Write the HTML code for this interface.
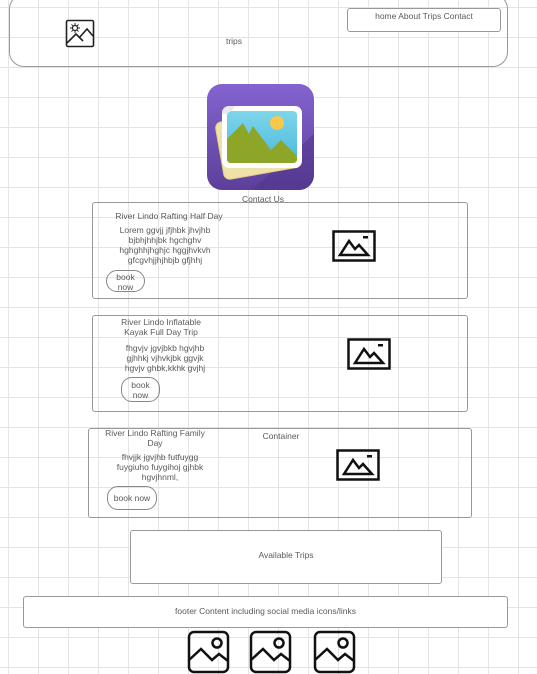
<!DOCTYPE html>
<html><head><meta charset="utf-8"><style>
html,body{margin:0;padding:0}
body{width:537px;height:672px;overflow:hidden;position:relative;font-family:"Liberation Sans",sans-serif;color:#5a5a5a;font-size:8.5px;
background-color:#fff;
background-image:linear-gradient(to right,#e4e4e4 1px,transparent 1px),linear-gradient(to bottom,#e4e4e4 1px,transparent 1px);
background-size:30px 30px;background-position:8px 7px;}
.a{position:absolute}
.box{position:absolute;border:1px solid #999;border-radius:3px;box-sizing:border-box}
.t{position:absolute;text-align:center;line-height:10px;white-space:nowrap}
.btn{position:absolute;border:1px solid #888;border-radius:11px;box-sizing:border-box;text-align:center;line-height:10px;white-space:nowrap}
</style></head><body>
<div class="box" style="left:9px;top:-6px;width:499px;height:73px;border-radius:15px"></div>
<div class="box" style="left:347px;top:8px;width:154px;height:24px;background:#fff"></div>
<div class="t" style="left:347px;top:11px;width:154px">home About Trips Contact</div>
<div class="t" style="left:214px;top:36px;width:40px">trips</div>
<svg class="a" style="left:65px;top:19px" width="30" height="29" viewBox="0 0 30 29"><rect x="1.5" y="1.5" width="27" height="26" rx="1.5" fill="#fff" stroke="#222" stroke-width="1.6"/><path d="M2 24 L11 15 L18 22 M14 19 L22 10 L28 17" fill="none" stroke="#222" stroke-width="1.6"/><circle cx="10" cy="9" r="2.5" fill="none" stroke="#222" stroke-width="1.2"/><path d="M10 4v2M10 12v2M5 9h2M13 9h2M6.5 5.5l1.3 1.3M12.2 11.2l1.3 1.3M6.5 12.5l1.3-1.3M12.2 6.8l1.3-1.3" stroke="#222" stroke-width="1"/></svg>

<svg class="a" style="left:207px;top:84px" width="107" height="106" viewBox="0 0 107 106">
<defs><linearGradient id="g" x1="0" y1="0" x2="0" y2="1"><stop offset="0" stop-color="#8463d0"/><stop offset="1" stop-color="#5c3f9a"/></linearGradient>
<linearGradient id="s" x1="0" y1="0" x2="0" y2="1"><stop offset="0" stop-color="#7fd6ea"/><stop offset="1" stop-color="#4ab8dc"/></linearGradient>
<clipPath id="c"><rect width="107" height="106" rx="15"/></clipPath></defs>
<g clip-path="url(#c)">
<rect width="107" height="106" fill="url(#g)"/>
<path d="M40 110 L107 50 L107 106 Z" fill="#4d3488" opacity=".5"/>
</g>
<g transform="rotate(-10 50 60)"><rect x="12" y="32" width="78" height="58" rx="6" fill="#efe2a8" stroke="#e2cf85"/></g>
<rect x="15" y="22" width="80" height="62" rx="7" fill="#fff"/>
<rect x="20" y="27" width="70" height="52" rx="4" fill="url(#s)"/>
<path d="M20 55 L36 39 L42 50 L46 42 L64 66 L74 56 L90 72 L90 75 Q90 79 86 79 L24 79 Q20 79 20 75 Z" fill="#8ea628"/>
<circle cx="70" cy="39" r="7" fill="#f8c84a"/>
<path d="M15 30 Q15 22 23 22 L28 22 Q24 30 15 30 Z" fill="#e8e8e8"/>
</svg>
<div class="t" style="left:213px;top:194px;width:100px">Contact Us</div>

<div class="box" style="left:92px;top:202px;width:376px;height:97px"></div>
<div class="t" style="left:100px;top:211px;width:138px">River Lindo Rafting Half Day</div>
<div class="t" style="left:105px;top:225px;width:120px">Lorem ggvjj jfjhbk jhvjhb<br>bjbhjhhjbk hgchghv<br>hghghhjhghjc hggjhvkvh<br>gfcgvhjjhjhbjb gfjhhj</div>
<div class="btn" style="left:106px;top:270px;width:39px;height:22px;padding-top:1px">book<br>now</div>
<svg class="a" style="left:332px;top:230px" width="44" height="32" viewBox="0 0 44 32"><rect x="1.5" y="1.5" width="41" height="29" fill="none" stroke="#111" stroke-width="2.5"/><path d="M8 25 L17 11 L23 19 L27 15 L36 25 Z" fill="none" stroke="#111" stroke-width="2.5"/><rect x="31" y="6" width="5" height="2.5" fill="#111"/></svg>

<div class="box" style="left:92px;top:315px;width:376px;height:97px"></div>
<div class="t" style="left:106px;top:317px;width:110px">River Lindo Inflatable<br>Kayak Full Day Trip</div>
<div class="t" style="left:110px;top:343px;width:110px">fhgvjv jgvjbkb hgvjhb<br>gjhhkj vjhvkjbk ggvjk<br>hgvjv ghbk,kkhk gvjhj</div>
<div class="btn" style="left:121px;top:377px;width:39px;height:25px;padding-top:2px">book<br>now</div>
<svg class="a" style="left:347px;top:338px" width="44" height="32" viewBox="0 0 44 32"><rect x="1.5" y="1.5" width="41" height="29" fill="none" stroke="#111" stroke-width="2.5"/><path d="M8 25 L17 11 L23 19 L27 15 L36 25 Z" fill="none" stroke="#111" stroke-width="2.5"/><rect x="31" y="6" width="5" height="2.5" fill="#111"/></svg>

<div class="box" style="left:88px;top:428px;width:384px;height:90px"></div>
<div class="t" style="left:95px;top:428px;width:120px">River Lindo Rafting Family<br>Day</div>
<div class="t" style="left:261px;top:431px;width:40px">Container</div>
<div class="t" style="left:100px;top:452px;width:120px">fhvjjk jgvjhb futfuygg<br>fuygiuho fuygihoj gjhbk<br>hgvjhnml,</div>
<div class="btn" style="left:107px;top:486px;width:50px;height:24px;line-height:22px">book now</div>
<svg class="a" style="left:336px;top:449px" width="44" height="32" viewBox="0 0 44 32"><rect x="1.5" y="1.5" width="41" height="29" fill="none" stroke="#111" stroke-width="2.5"/><path d="M8 25 L17 11 L23 19 L27 15 L36 25 Z" fill="none" stroke="#111" stroke-width="2.5"/><rect x="31" y="6" width="5" height="2.5" fill="#111"/></svg>

<div class="box" style="left:130px;top:530px;width:312px;height:54px;background:#fff"></div>
<div class="t" style="left:130px;top:550px;width:312px">Available Trips</div>
<div class="box" style="left:23px;top:596px;width:485px;height:32px;background:#fff"></div>
<div class="t" style="left:23px;top:606px;width:485px">footer Content including social media icons/links</div>

<svg class="a" style="left:187px;top:630px" width="44" height="44" viewBox="0 0 44 44"><rect x="2" y="2" width="39" height="40" rx="5" fill="none" stroke="#111" stroke-width="2.5"/><path d="M2 30 L14 19 L25 30 L32 24 L41 31" fill="none" stroke="#111" stroke-width="2.5"/><circle cx="30" cy="13" r="4.5" fill="none" stroke="#111" stroke-width="2.5"/></svg>
<svg class="a" style="left:249px;top:630px" width="44" height="44" viewBox="0 0 44 44"><rect x="2" y="2" width="39" height="40" rx="5" fill="none" stroke="#111" stroke-width="2.5"/><path d="M2 30 L14 19 L25 30 L32 24 L41 31" fill="none" stroke="#111" stroke-width="2.5"/><circle cx="30" cy="13" r="4.5" fill="none" stroke="#111" stroke-width="2.5"/></svg>
<svg class="a" style="left:313px;top:630px" width="44" height="44" viewBox="0 0 44 44"><rect x="2" y="2" width="39" height="40" rx="5" fill="none" stroke="#111" stroke-width="2.5"/><path d="M2 30 L14 19 L25 30 L32 24 L41 31" fill="none" stroke="#111" stroke-width="2.5"/><circle cx="30" cy="13" r="4.5" fill="none" stroke="#111" stroke-width="2.5"/></svg>
</body></html>
